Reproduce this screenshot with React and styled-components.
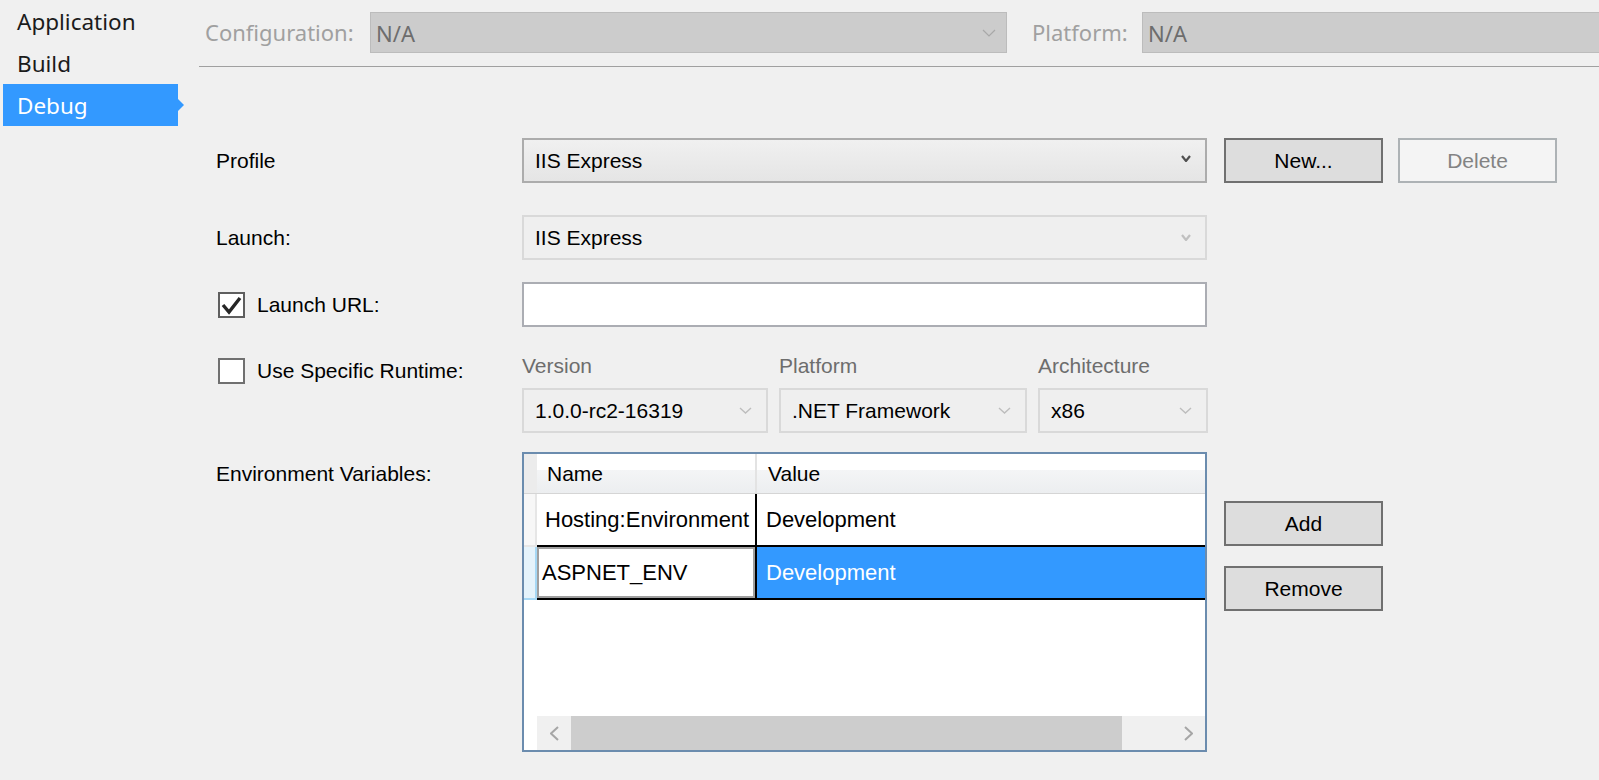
import React from 'react';
import styled, { createGlobalStyle, css } from 'styled-components';

const GlobalStyle = createGlobalStyle`
  html, body {
    margin: 0;
    padding: 0;
    background: #f0f0f0;
  }
  body {
    width: 1599px;
    height: 780px;
    overflow: hidden;
    font-family: 'Liberation Sans', Arial, sans-serif;
  }
`;

const Page = styled.div`
  display: flex;
  width: 1599px;
  height: 780px;
  overflow: hidden;
  background: #f0f0f0;
`;

const Nav = styled.nav`
  width: 196px;
  padding-left: 3px;
  flex-shrink: 0;
  font-family: 'Noto Sans', 'Open Sans', sans-serif;
`;

const NavItem = styled.div`
  position: relative;
  width: 175px;
  height: 42px;
  box-sizing: border-box;
  padding-left: 14px;
  display: flex;
  align-items: center;
  font-size: 22.5px;
  color: ${(p) => (p.$active ? '#ffffff' : '#1b1b1b')};
  background: ${(p) => (p.$active ? '#3399ff' : 'transparent')};
  ${(p) =>
    p.$active &&
    css`
      &::after {
        content: '';
        position: absolute;
        right: -6px;
        top: 15px;
        border-left: 6px solid #3399ff;
        border-top: 6px solid transparent;
        border-bottom: 6px solid transparent;
      }
    `}
`;

const Main = styled.main`
  flex: 1;
  min-width: 0;
  overflow: hidden;
`;

const TopBar = styled.div`
  display: flex;
  align-items: flex-start;
  height: 67px;
  box-sizing: border-box;
  padding: 12px 0 0 6px;
  border-bottom: 1px solid #a0a0a0;
  font-family: 'Noto Sans', 'Open Sans', sans-serif;
  font-size: 22px;
`;

const TopLabel = styled.div`
  width: ${(p) => p.$w}px;
  margin-left: ${(p) => p.$ml || 0}px;
  flex-shrink: 0;
  height: 41px;
  line-height: 41px;
  color: #a0a0a0;
`;

const TopCombo = styled.div`
  display: flex;
  align-items: center;
  height: 41px;
  box-sizing: border-box;
  padding: 0 10px 0 5px;
  border: 1px solid #bcbcbc;
  background: #cccccc;
  color: #6d6d6d;
  flex: ${(p) => (p.$grow ? '1 0 auto' : '0 0 auto')};
  width: ${(p) => (p.$w ? `${p.$w}px` : 'auto')};
  margin-right: ${(p) => (p.$grow ? '-30px' : '0')};
`;

const ChevronBox = styled.span`
  margin-left: auto;
  display: flex;
  align-items: center;
  margin-top: ${(p) => p.$dy || 0}px;
`;

const Form = styled.div`
  display: flex;
  flex-direction: column;
  padding: 71px 0 0 17px;
`;

const Row = styled.div`
  display: flex;
  align-items: ${(p) => p.$align || 'center'};
  margin-top: ${(p) => p.$mt || 0}px;
`;

const LabelCell = styled.div`
  width: 306px;
  flex-shrink: 0;
  display: flex;
  align-items: center;
  font-size: 21px;
  color: #000;
  margin-top: ${(p) => p.$mt || 0}px;
  height: ${(p) => p.$h || 'auto'};
`;

const Control = styled.div`
  width: 685px;
  flex-shrink: 0;
`;

const Side = styled.div`
  display: flex;
  flex-direction: ${(p) => (p.$column ? 'column' : 'row')};
  gap: ${(p) => (p.$column ? 20 : 15)}px;
  margin-left: 17px;
  margin-top: ${(p) => p.$mt || 0}px;
`;

const Combo = styled.div`
  display: flex;
  align-items: center;
  height: 45px;
  box-sizing: border-box;
  padding: 0 ${(p) => p.$pr || 14}px 0 11px;
  font-size: 21px;
  color: #000;
  border: 2px solid ${(p) => (p.$enabled ? '#acacac' : '#d9d9d9')};
  background: ${(p) =>
    p.$enabled ? 'linear-gradient(#f0f0f0, #e5e5e5)' : '#efefef'};
`;

const TextBox = styled.div`
  height: 45px;
  box-sizing: border-box;
  border: 2px solid #abadb3;
  background: #fff;
`;

const Button = styled.button`
  width: 159px;
  height: 45px;
  box-sizing: border-box;
  margin: 0;
  padding: 0;
  font-family: 'Liberation Sans', Arial, sans-serif;
  font-size: 21px;
  color: ${(p) => (p.$disabled ? '#838383' : '#000')};
  background: ${(p) => (p.$disabled ? '#f4f4f4' : '#dddddd')};
  border: 2px solid ${(p) => (p.$disabled ? '#adb2b5' : '#707070')};
`;

const CheckRow = styled.label`
  display: flex;
  align-items: center;
  gap: 12px;
  padding-left: 2px;
`;

const CheckBox = styled.span`
  width: 27px;
  height: 26px;
  box-sizing: border-box;
  border: 2px solid ${(p) => (p.$checked ? '#5f5f5f' : '#707070')};
  background: #fff;
  display: flex;
  align-items: center;
  justify-content: center;
`;

const RuntimeGrid = styled.div`
  display: grid;
  grid-template-columns: 246px 248px 170px;
  column-gap: 11px;
  row-gap: 11px;
`;

const Caption = styled.div`
  font-size: 21px;
  line-height: 22px;
  color: #6d6d6d;
`;

const DataGrid = styled.div`
  width: 685px;
  height: 300px;
  box-sizing: border-box;
  border: 2px solid #6b8cae;
  background: #fff;
  display: flex;
  flex-direction: column;
`;

const GridHeader = styled.div`
  display: flex;
  height: 40px;
  box-sizing: border-box;
  border-bottom: 1px solid #d5d5d5;
`;

const HeaderCorner = styled.div`
  width: 13px;
  flex-shrink: 0;
  background: #ececec;
`;

const HeaderCell = styled.div`
  display: flex;
  align-items: center;
  box-sizing: border-box;
  width: ${(p) => (p.$w ? `${p.$w}px` : 'auto')};
  flex: ${(p) => (p.$w ? '0 0 auto' : '1')};
  padding-left: ${(p) => p.$pl}px;
  font-size: 21px;
  color: #000;
  background: linear-gradient(#ffffff 0%, #ffffff 40%, #f4f5f6 40%, #eceef0 100%);
  border-right: ${(p) => (p.$w ? '2px solid #e3e3e3' : 'none')};
`;

const GridRow = styled.div`
  display: flex;
  height: 53px;
`;

const RowHeader = styled.div`
  width: 13px;
  flex-shrink: 0;
  box-sizing: border-box;
  background: ${(p) => (p.$selected ? '#e5f3fb' : '#f7f7f7')};
  border-right: 2px solid ${(p) => (p.$selected ? '#a6d8f5' : '#e6e6e6')};
  border-bottom: 2px solid ${(p) => (p.$selected ? '#a6d8f5' : '#e6e6e6')};
`;

const RowBody = styled.div`
  flex: 1;
  display: flex;
  border-bottom: 2px solid #000;
`;

const NameCell = styled.div`
  width: 220px;
  flex-shrink: 0;
  box-sizing: border-box;
  display: flex;
  align-items: center;
  padding-left: ${(p) => (p.$editing ? 5 : 8)}px;
  border-right: 2px solid #000;
  font-size: 22px;
  color: #000;
  background: #fff;
  ${(p) =>
    p.$editing &&
    css`
      box-shadow: inset 0 0 0 2px #a0a0a0;
    `}
`;

const ValueCell = styled.div`
  flex: 1;
  display: flex;
  align-items: center;
  padding-left: 9px;
  font-size: 22px;
  color: ${(p) => (p.$selected ? '#fff' : '#000')};
  background: ${(p) => (p.$selected ? '#3399ff' : '#fff')};
`;

const GridFill = styled.div`
  flex: 1;
`;

const ScrollBar = styled.div`
  display: flex;
  height: 34px;
`;

const ScrollCorner = styled.div`
  width: 13px;
  flex-shrink: 0;
  background: #fff;
`;

const Track = styled.div`
  flex: 1;
  display: flex;
  background: #f0f0f0;
`;

const ScrollArrow = styled.div`
  width: 34px;
  flex-shrink: 0;
  display: flex;
  align-items: center;
  justify-content: center;
`;

const Thumb = styled.div`
  width: ${(p) => p.$w}px;
  flex-shrink: 0;
  background: #cdcdcd;
`;

const TrackGap = styled.div`
  flex: 1;
`;

function Chevron({ w = 10, h = 6, color = '#555', stroke = 2, dir = 'down' }) {
  const pts = {
    down: `1,1 ${w / 2},${h - 1} ${w - 1},1`,
    left: `${w - 1},1 1,${h / 2} ${w - 1},${h - 1}`,
    right: `1,1 ${w - 1},${h / 2} 1,${h - 1}`,
  }[dir];
  return (
    <svg width={w} height={h} viewBox={`0 0 ${w} ${h}`}>
      <polyline points={pts} fill="none" stroke={color} strokeWidth={stroke} />
    </svg>
  );
}

function CheckMark() {
  return (
    <svg width="23" height="22" viewBox="0 0 23 22">
      <polyline
        points="3,11 9,18 20,4"
        fill="none"
        stroke="#262626"
        strokeWidth="3.4"
        strokeLinejoin="miter"
      />
    </svg>
  );
}

export default function App() {
  return (
    <>
      <GlobalStyle />
      <Page>
        <Nav>
          <NavItem>Application</NavItem>
          <NavItem>Build</NavItem>
          <NavItem $active>Debug</NavItem>
        </Nav>
        <Main>
          <TopBar>
            <TopLabel $w={165}>Configuration:</TopLabel>
            <TopCombo $w={637}>
              N/A
              <ChevronBox>
                <Chevron w={14} h={8} color="#a8a8a8" stroke={1.2} />
              </ChevronBox>
            </TopCombo>
            <TopLabel $w={110} $ml={25}>
              Platform:
            </TopLabel>
            <TopCombo $grow>N/A</TopCombo>
          </TopBar>

          <Form>
            <Row>
              <LabelCell>Profile</LabelCell>
              <Control>
                <Combo $enabled $pr={14}>
                  IIS Express
                  <ChevronBox $dy={-4}>
                    <Chevron w={10} h={7} color="#505050" stroke={2.2} />
                  </ChevronBox>
                </Combo>
              </Control>
              <Side>
                <Button>New...</Button>
                <Button $disabled>Delete</Button>
              </Side>
            </Row>

            <Row $mt={32}>
              <LabelCell>Launch:</LabelCell>
              <Control>
                <Combo $pr={14}>
                  IIS Express
                  <ChevronBox>
                    <Chevron w={10} h={7} color="#c0c0c0" stroke={2.2} />
                  </ChevronBox>
                </Combo>
              </Control>
            </Row>

            <Row $mt={22}>
              <LabelCell>
                <CheckRow>
                  <CheckBox $checked>
                    <CheckMark />
                  </CheckBox>
                  Launch URL:
                </CheckRow>
              </LabelCell>
              <Control>
                <TextBox />
              </Control>
            </Row>

            <Row $mt={28} $align="flex-start">
              <LabelCell $mt={3} $h="26px">
                <CheckRow>
                  <CheckBox />
                  Use Specific Runtime:
                </CheckRow>
              </LabelCell>
              <Control>
                <RuntimeGrid>
                  <Caption>Version</Caption>
                  <Caption>Platform</Caption>
                  <Caption>Architecture</Caption>
                  <Combo $pr={14}>
                    1.0.0-rc2-16319
                    <ChevronBox>
                      <Chevron w={13} h={7} color="#bdbdbd" stroke={1.4} />
                    </ChevronBox>
                  </Combo>
                  <Combo $pr={14}>
                    .NET Framework
                    <ChevronBox>
                      <Chevron w={13} h={7} color="#bdbdbd" stroke={1.4} />
                    </ChevronBox>
                  </Combo>
                  <Combo $pr={14}>
                    x86
                    <ChevronBox>
                      <Chevron w={13} h={7} color="#bdbdbd" stroke={1.4} />
                    </ChevronBox>
                  </Combo>
                </RuntimeGrid>
              </Control>
            </Row>

            <Row $mt={19} $align="flex-start">
              <LabelCell $mt={10} $h="24px">
                Environment Variables:
              </LabelCell>
              <Control>
                <DataGrid>
                  <GridHeader>
                    <HeaderCorner />
                    <HeaderCell $w={220} $pl={10}>
                      Name
                    </HeaderCell>
                    <HeaderCell $pl={11}>Value</HeaderCell>
                  </GridHeader>
                  <GridRow>
                    <RowHeader />
                    <RowBody>
                      <NameCell>Hosting:Environment</NameCell>
                      <ValueCell>Development</ValueCell>
                    </RowBody>
                  </GridRow>
                  <GridRow>
                    <RowHeader $selected />
                    <RowBody>
                      <NameCell $editing>ASPNET_ENV</NameCell>
                      <ValueCell $selected>Development</ValueCell>
                    </RowBody>
                  </GridRow>
                  <GridFill />
                  <ScrollBar>
                    <ScrollCorner />
                    <Track>
                      <ScrollArrow>
                        <Chevron w={9} h={15} color="#a6a6a6" stroke={2} dir="left" />
                      </ScrollArrow>
                      <Thumb $w={551} />
                      <TrackGap />
                      <ScrollArrow>
                        <Chevron w={9} h={15} color="#a6a6a6" stroke={2} dir="right" />
                      </ScrollArrow>
                    </Track>
                  </ScrollBar>
                </DataGrid>
              </Control>
              <Side $column $mt={49}>
                <Button>Add</Button>
                <Button>Remove</Button>
              </Side>
            </Row>
          </Form>
        </Main>
      </Page>
    </>
  );
}
